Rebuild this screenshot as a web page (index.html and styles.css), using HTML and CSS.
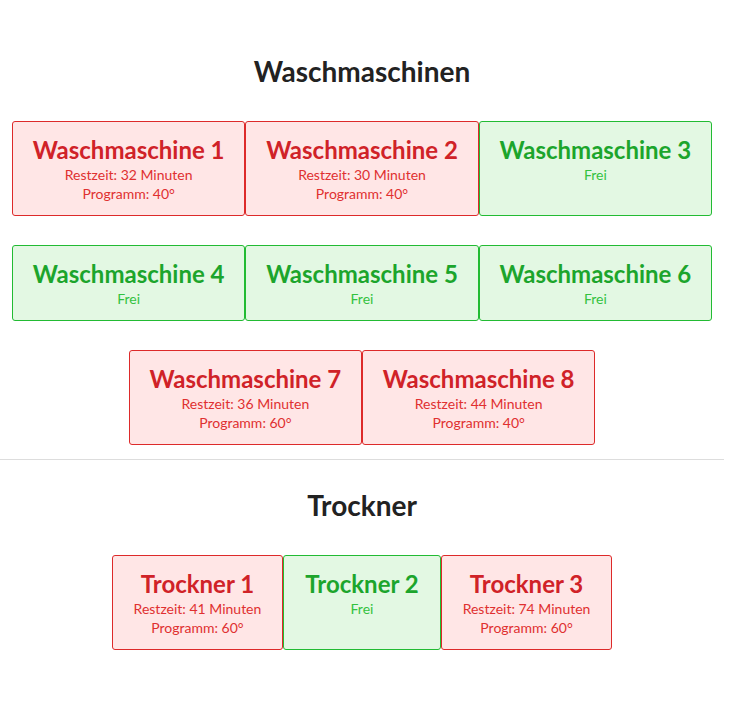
FILE: index.html
```html
<!DOCTYPE html>
<html lang="de">
<head>
<meta charset="utf-8">
<title>Waschküche</title>
<link rel="stylesheet" href="styles.css">
</head>
<body>
<main class="page">
  <section class="section section-first">
    <h2 class="heading">Waschmaschinen</h2>
    <div class="grid">
      <div class="card busy third"><div class="title">Waschmaschine 1</div><div class="info">Restzeit: 32 Minuten</div><div class="info">Programm: 40°</div></div>
      <div class="card busy third"><div class="title">Waschmaschine 2</div><div class="info">Restzeit: 30 Minuten</div><div class="info">Programm: 40°</div></div>
      <div class="card free third"><div class="title">Waschmaschine 3</div><div class="info">Frei</div></div>
      <div class="card free third"><div class="title">Waschmaschine 4</div><div class="info">Frei</div></div>
      <div class="card free third"><div class="title">Waschmaschine 5</div><div class="info">Frei</div></div>
      <div class="card free third"><div class="title">Waschmaschine 6</div><div class="info">Frei</div></div>
      <div class="card busy third"><div class="title">Waschmaschine 7</div><div class="info">Restzeit: 36 Minuten</div><div class="info">Programm: 60°</div></div>
      <div class="card busy third"><div class="title">Waschmaschine 8</div><div class="info">Restzeit: 44 Minuten</div><div class="info">Programm: 40°</div></div>
    </div>
  </section>
  <hr class="divider">
  <section class="section">
    <h2 class="heading">Trockner</h2>
    <div class="grid">
      <div class="card busy"><div class="title">Trockner 1</div><div class="info">Restzeit: 41 Minuten</div><div class="info">Programm: 60°</div></div>
      <div class="card free"><div class="title">Trockner 2</div><div class="info">Frei</div></div>
      <div class="card busy"><div class="title">Trockner 3</div><div class="info">Restzeit: 74 Minuten</div><div class="info">Programm: 60°</div></div>
    </div>
  </section>
</main>
</body>
</html>
```
FILE: styles.css
```css
html, body {
  margin: 0;
  padding: 0;
  background: #ffffff;
}

body {
  font-family: Lato, "Open Sans", "Liberation Sans", sans-serif;
  color: #222222;
}

.page {
  width: 724px;
}

.section {
  padding-top: 28px;
}

.section-first {
  padding-top: 54px;
}

.heading {
  margin: 0 0 33px;
  font-size: 28px;
  line-height: 34px;
  font-weight: 700;
  text-align: center;
  color: #222222;
}

.grid {
  width: 700px;
  margin: 0 auto;
  display: flex;
  flex-wrap: wrap;
  justify-content: center;
  row-gap: 29px;
}

.card {
  box-sizing: border-box;
  padding: 13px 21px 12px;
  border: 1px solid;
  border-radius: 3px;
  text-align: center;
  white-space: nowrap;
}

.third {
  flex: 0 0 33.3333%;
  padding-left: 4px;
  padding-right: 4px;
}

.busy {
  background: #ffe6e6;
  border-color: #dd2a2a;
  color: #d02228;
}

.free {
  background: #e3f8e3;
  border-color: #22bb33;
  color: #1ca52c;
}

.title {
  font-size: 24px;
  line-height: 29px;
  font-weight: 700;
  margin-bottom: 1px;
}

.info {
  font-size: 14px;
  line-height: 19px;
}

.busy .info {
  color: #e03030;
}

.free .info {
  color: #33c23f;
}

.divider {
  margin: 14px 0 0;
  border: 0;
  border-top: 1px solid #dddddd;
  height: 0;
}
```
